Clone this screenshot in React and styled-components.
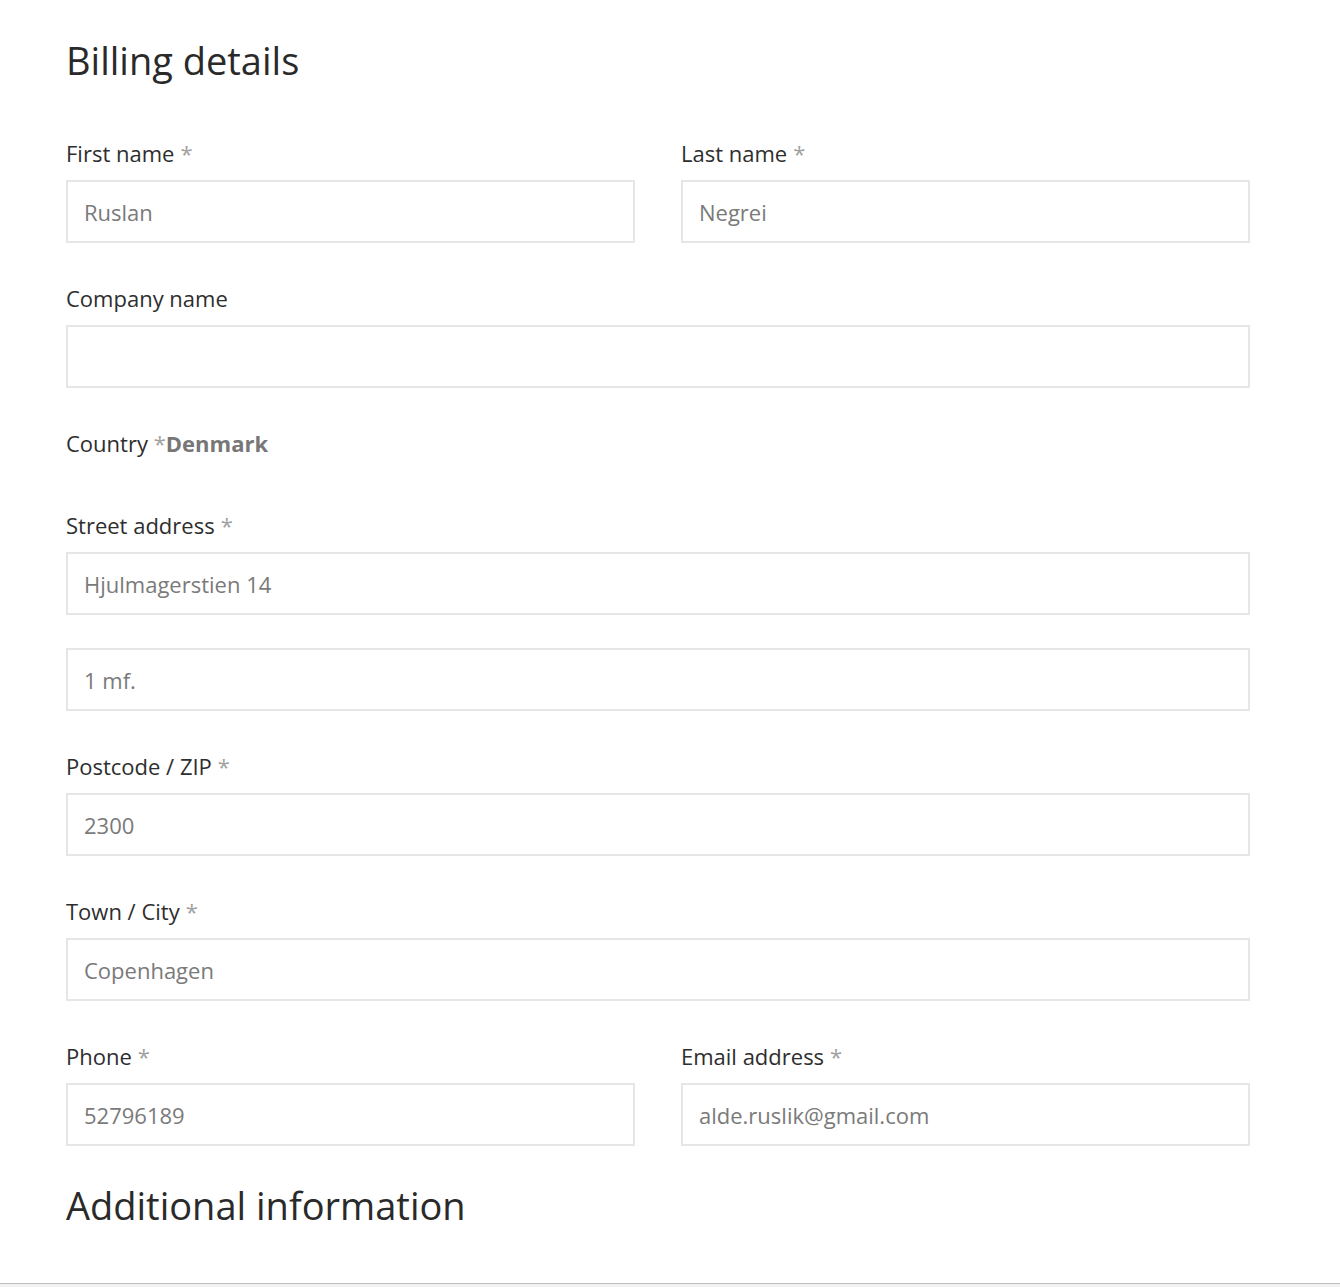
import React from "react";
import styled, { createGlobalStyle } from "styled-components";

const Global = createGlobalStyle`
  html, body { margin: 0; padding: 0; background: #fff; }
  body { font-family: "Open Sans", "Noto Sans", sans-serif; }
  * { box-sizing: border-box; }
`;

const Page = styled.div`
  width: 1340px;
  padding: 37px 90px 0 66px;
`;

const Heading = styled.h3`
  margin: 0 0 ${(p) => p.$mb || 0}px;
  font-size: 38px;
  line-height: 46px;
  font-weight: 400;
  color: #2a2a2a;
`;

const Fields = styled.div`
  display: flex;
  flex-wrap: wrap;
  justify-content: space-between;
`;

const Row = styled.div`
  width: ${(p) => (p.$half ? "calc(50% - 23px)" : "100%")};
  margin-bottom: ${(p) => p.$mb ?? 40}px;
`;

const Label = styled.label`
  display: block;
  font-size: 22px;
  line-height: 31px;
  color: #2e2e2e;
  margin-bottom: ${(p) => (p.$inline ? 0 : 11)}px;
`;

const Req = styled.span`
  color: #a0a0a0;
  margin-left: ${(p) => (p.$tight ? 0 : 6)}px;
`;

const Value = styled.strong`
  color: #777;
  font-weight: 700;
`;

const Input = styled.input`
  display: block;
  width: 100%;
  height: 63px;
  border: 2px solid #e6e6e6;
  padding: 0 16px;
  font-family: "Open Sans", "Noto Sans", sans-serif;
  font-size: 22px;
  color: #7a7a7a;
  background: #fff;
  outline: none;
  margin-top: ${(p) => p.$mt || 0}px;
`;

const Footer = styled.div`
  margin-top: 55px;
  height: 4px;
  border-top: 1px solid #bdbdbd;
  background: #f1f1f1;
`;

function Field({ label, required, value, half, mb, extra }) {
  return (
    <Row $half={half} $mb={mb}>
      <Label>
        {label}
        {required && <Req>*</Req>}
      </Label>
      <Input readOnly defaultValue={value} />
      {extra !== undefined && <Input readOnly defaultValue={extra} $mt={33} />}
    </Row>
  );
}

export default function App() {
  return (
    <>
      <Global />
      <Page>
        <Heading $mb={55}>Billing details</Heading>
        <Fields>
          <Field label="First name" required value="Ruslan" half />
          <Field label="Last name" required value="Negrei" half />
          <Field label="Company name" value="" />
          <Row $mb={51}>
            <Label $inline>
              Country <Req $tight>*</Req>
              <Value>Denmark</Value>
            </Label>
          </Row>
          <Field label="Street address" required value="Hjulmagerstien 14" extra="1 mf." />
          <Field label="Postcode / ZIP" required value="2300" />
          <Field label="Town / City" required value="Copenhagen" />
          <Field label="Phone" required value="52796189" half mb={36} />
          <Field label="Email address" required value="alde.ruslik@gmail.com" half mb={36} />
        </Fields>
        <Heading>Additional information</Heading>
      </Page>
      <Footer />
    </>
  );
}
